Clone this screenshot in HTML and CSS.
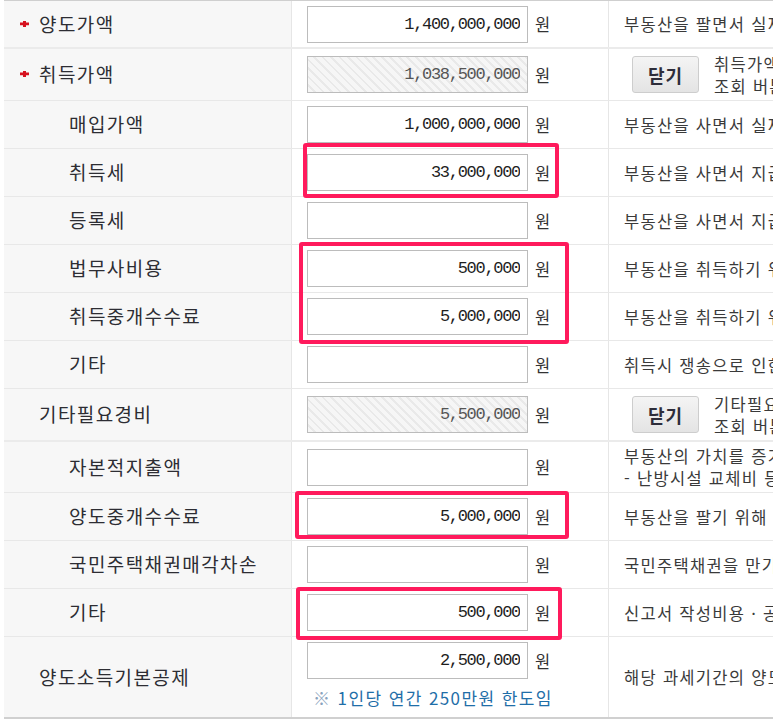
FILE: index.html
```html
<!DOCTYPE html>
<html lang="ko">
<head>
<meta charset="utf-8">
<title>양도소득세 계산</title>
<link rel="stylesheet" href="styles.css">
</head>
<body>
<div class="sheet">
  <div class="row row-group">
    <div class="label"><span class="star"><svg width="9" height="6" viewBox="0 0 9 6"><path d="M3 0h3v1.6h3v2.6H6V6H3V4.2H0V1.6h3z" fill="#d6121f"/></svg></span>양도가액</div>
    <div class="field"><input class="num" type="text" value="1,400,000,000"><span class="unit">원</span></div>
    <div class="desc">부동산을 팔면서 실제로 받은 금액입니다.</div>
  </div>
  <div class="row row-tall">
    <div class="label"><span class="star"><svg width="9" height="6" viewBox="0 0 9 6"><path d="M3 0h3v1.6h3v2.6H6V6H3V4.2H0V1.6h3z" fill="#d6121f"/></svg></span>취득가액</div>
    <div class="field"><input class="num num-off" type="text" value="1,038,500,000" readonly><span class="unit">원</span></div>
    <div class="desc desc-btn"><button class="btn" type="button">닫기</button><span class="two">취득가액의 상세 항목을 입력하시려면<br>조회 버튼을 눌러 주세요.</span></div>
  </div>
  <div class="row">
    <div class="label sub">매입가액</div>
    <div class="field"><input class="num" type="text" value="1,000,000,000"><span class="unit">원</span></div>
    <div class="desc">부동산을 사면서 실제로 지급한 금액입니다.</div>
  </div>
  <div class="row">
    <div class="label sub">취득세</div>
    <div class="field"><input class="num" type="text" value="33,000,000"><span class="unit">원</span></div>
    <div class="desc">부동산을 사면서 지급한 취득세입니다.</div>
  </div>
  <div class="row">
    <div class="label sub">등록세</div>
    <div class="field"><input class="num" type="text" value=""><span class="unit">원</span></div>
    <div class="desc">부동산을 사면서 지급한 등록세입니다.</div>
  </div>
  <div class="row">
    <div class="label sub">법무사비용</div>
    <div class="field"><input class="num" type="text" value="500,000"><span class="unit">원</span></div>
    <div class="desc">부동산을 취득하기 위해 지급한 법무사 비용</div>
  </div>
  <div class="row">
    <div class="label sub">취득중개수수료</div>
    <div class="field"><input class="num" type="text" value="5,000,000"><span class="unit">원</span></div>
    <div class="desc">부동산을 취득하기 위해 지급한 중개수수료</div>
  </div>
  <div class="row">
    <div class="label sub">기타</div>
    <div class="field"><input class="num" type="text" value=""><span class="unit">원</span></div>
    <div class="desc">취득시 쟁송으로 인한 소송비용 등</div>
  </div>
  <div class="row row-tall row-group">
    <div class="label top">기타필요경비</div>
    <div class="field"><input class="num num-off" type="text" value="5,500,000" readonly><span class="unit">원</span></div>
    <div class="desc desc-btn"><button class="btn" type="button">닫기</button><span class="two">기타필요경비의 상세 항목을 입력하시려면<br>조회 버튼을 눌러 주세요.</span></div>
  </div>
  <div class="row row-mid">
    <div class="label sub">자본적지출액</div>
    <div class="field"><input class="num" type="text" value=""><span class="unit">원</span></div>
    <div class="desc"><span class="two">부동산의 가치를 증가시키기 위해 지출한 비용<br>- 난방시설 교체비 등</span></div>
  </div>
  <div class="row">
    <div class="label sub">양도중개수수료</div>
    <div class="field"><input class="num" type="text" value="5,000,000"><span class="unit">원</span></div>
    <div class="desc">부동산을 팔기 위해 지급한 중개수수료</div>
  </div>
  <div class="row">
    <div class="label sub">국민주택채권매각차손</div>
    <div class="field"><input class="num" type="text" value=""><span class="unit">원</span></div>
    <div class="desc">국민주택채권을 만기 전에 매각하여 발생한 손실</div>
  </div>
  <div class="row">
    <div class="label sub">기타</div>
    <div class="field"><input class="num" type="text" value="500,000"><span class="unit">원</span></div>
    <div class="desc">신고서 작성비용 · 공증비용 등</div>
  </div>
  <div class="row row-last">
    <div class="label top">양도소득기본공제</div>
    <div class="field field-stack">
      <div class="line"><input class="num" type="text" value="2,500,000"><span class="unit">원</span></div>
      <div class="note"><span class="mark">※</span> 1인당 연간 250만원 한도임</div>
    </div>
    <div class="desc">해당 과세기간의 양도소득금액에서 공제합니다.</div>
  </div>

  <div class="hl hl-1"></div>
  <div class="hl hl-2"></div>
  <div class="hl hl-3"></div>
  <div class="hl hl-4"></div>
</div>
</body>
</html>
```

FILE: styles.css
```css
* { box-sizing: border-box; }
html, body { margin: 0; padding: 0; background: #fff; }
body {
  font-family: "Noto Sans CJK KR", "Noto Sans", sans-serif;
  color: #333;
  overflow: hidden;
}
.sheet {
  position: relative;
  width: 900px;
  padding-left: 4px;
}
.sheet::before {
  content: "";
  display: block;
  height: 1px;
  background: #cfcfcf;
}
.row {
  display: grid;
  grid-template-columns: 288px 317px 1fr;
  height: 48px;
  border-bottom: 1px solid #e8e8e8;
}
.row-group { border-bottom: 2px solid #ebebeb; }
.row:first-of-type { height: 48px; }
.row-tall { height: 52px; }
.row-tall.row-group { height: 53px; }
.row-mid { height: 51px; }
.row-last { height: 82px; border-bottom: 2px solid #d0d0d0; }

.label {
  display: flex;
  align-items: center;
  background: #f7f7f7;
  border-right: 1px solid #e6e6e6;
  font-size: 19px;
  letter-spacing: 1.4px;
  color: #2d2d33;
  padding-left: 16px;
  padding-bottom: 2px;
  white-space: nowrap;
}
.label.sub { padding-left: 65px; }
.label.top { padding-left: 35px; }
.star {
  display: inline-flex;
  width: 9px;
  margin-right: 10px;
  margin-top: 1px;
}
.field {
  display: flex;
  align-items: center;
  padding-left: 15px;
  border-right: 1px solid #e6e6e6;
}
.field-stack {
  flex-direction: column;
  align-items: flex-start;
  justify-content: flex-start;
  padding-top: 5px;
}
.line { display: flex; align-items: center; }
.num {
  width: 221px;
  height: 37px;
  border: 1px solid #bcbcbc;
  background: #fff;
  padding: 0 7px 0 4px;
  text-align: right;
  font-family: "Liberation Mono", "DejaVu Sans Mono", monospace;
  font-size: 17px;
  letter-spacing: -1.3px;
  color: #1e1e1e;
  outline: none;
  margin: 0;
}
.num-off {
  color: #555;
  background: repeating-linear-gradient(45deg, #f6f6f6 0, #f6f6f6 4px, #e9e9e9 4px, #e9e9e9 6px);
}
.unit {
  margin-left: 7px;
  font-size: 16.5px;
  color: #333;
}
.note {
  margin-top: 8px;
  margin-left: 6px;
  font-size: 17px;
  letter-spacing: 1.4px;
  line-height: 22px;
  color: #1f6ea8;
  white-space: nowrap;
}
.note .mark { color: #8aa3bd; }
.desc {
  display: flex;
  align-items: center;
  padding-left: 15px;
  font-size: 16.5px;
  letter-spacing: 1.3px;
  color: #3a3a3a;
  white-space: nowrap;
  overflow: hidden;
}
.desc-btn { padding-left: 23px; }
.two { line-height: 22px; }
.btn {
  width: 67px;
  height: 37px;
  margin: 0 15px 0 0;
  padding: 0;
  border: 1px solid #cdcdcd;
  border-radius: 3px;
  background: linear-gradient(#f4f4f4, #e4e4e4);
  font-family: "Noto Sans CJK KR", sans-serif;
  font-size: 18px;
  font-weight: 700;
  letter-spacing: 1px;
  color: #2d2d3a;
  flex: none;
}
.hl {
  position: absolute;
  border: 4px solid #ff1a5c;
  border-radius: 3px;
  pointer-events: none;
}
.hl-1 { left: 303px; top: 143px; width: 256px; height: 55px; }
.hl-2 { left: 299px; top: 242px; width: 270px; height: 102px; }
.hl-3 { left: 295px; top: 491px; width: 274px; height: 48px; }
.hl-4 { left: 296px; top: 587px; width: 266px; height: 53px; }
```
